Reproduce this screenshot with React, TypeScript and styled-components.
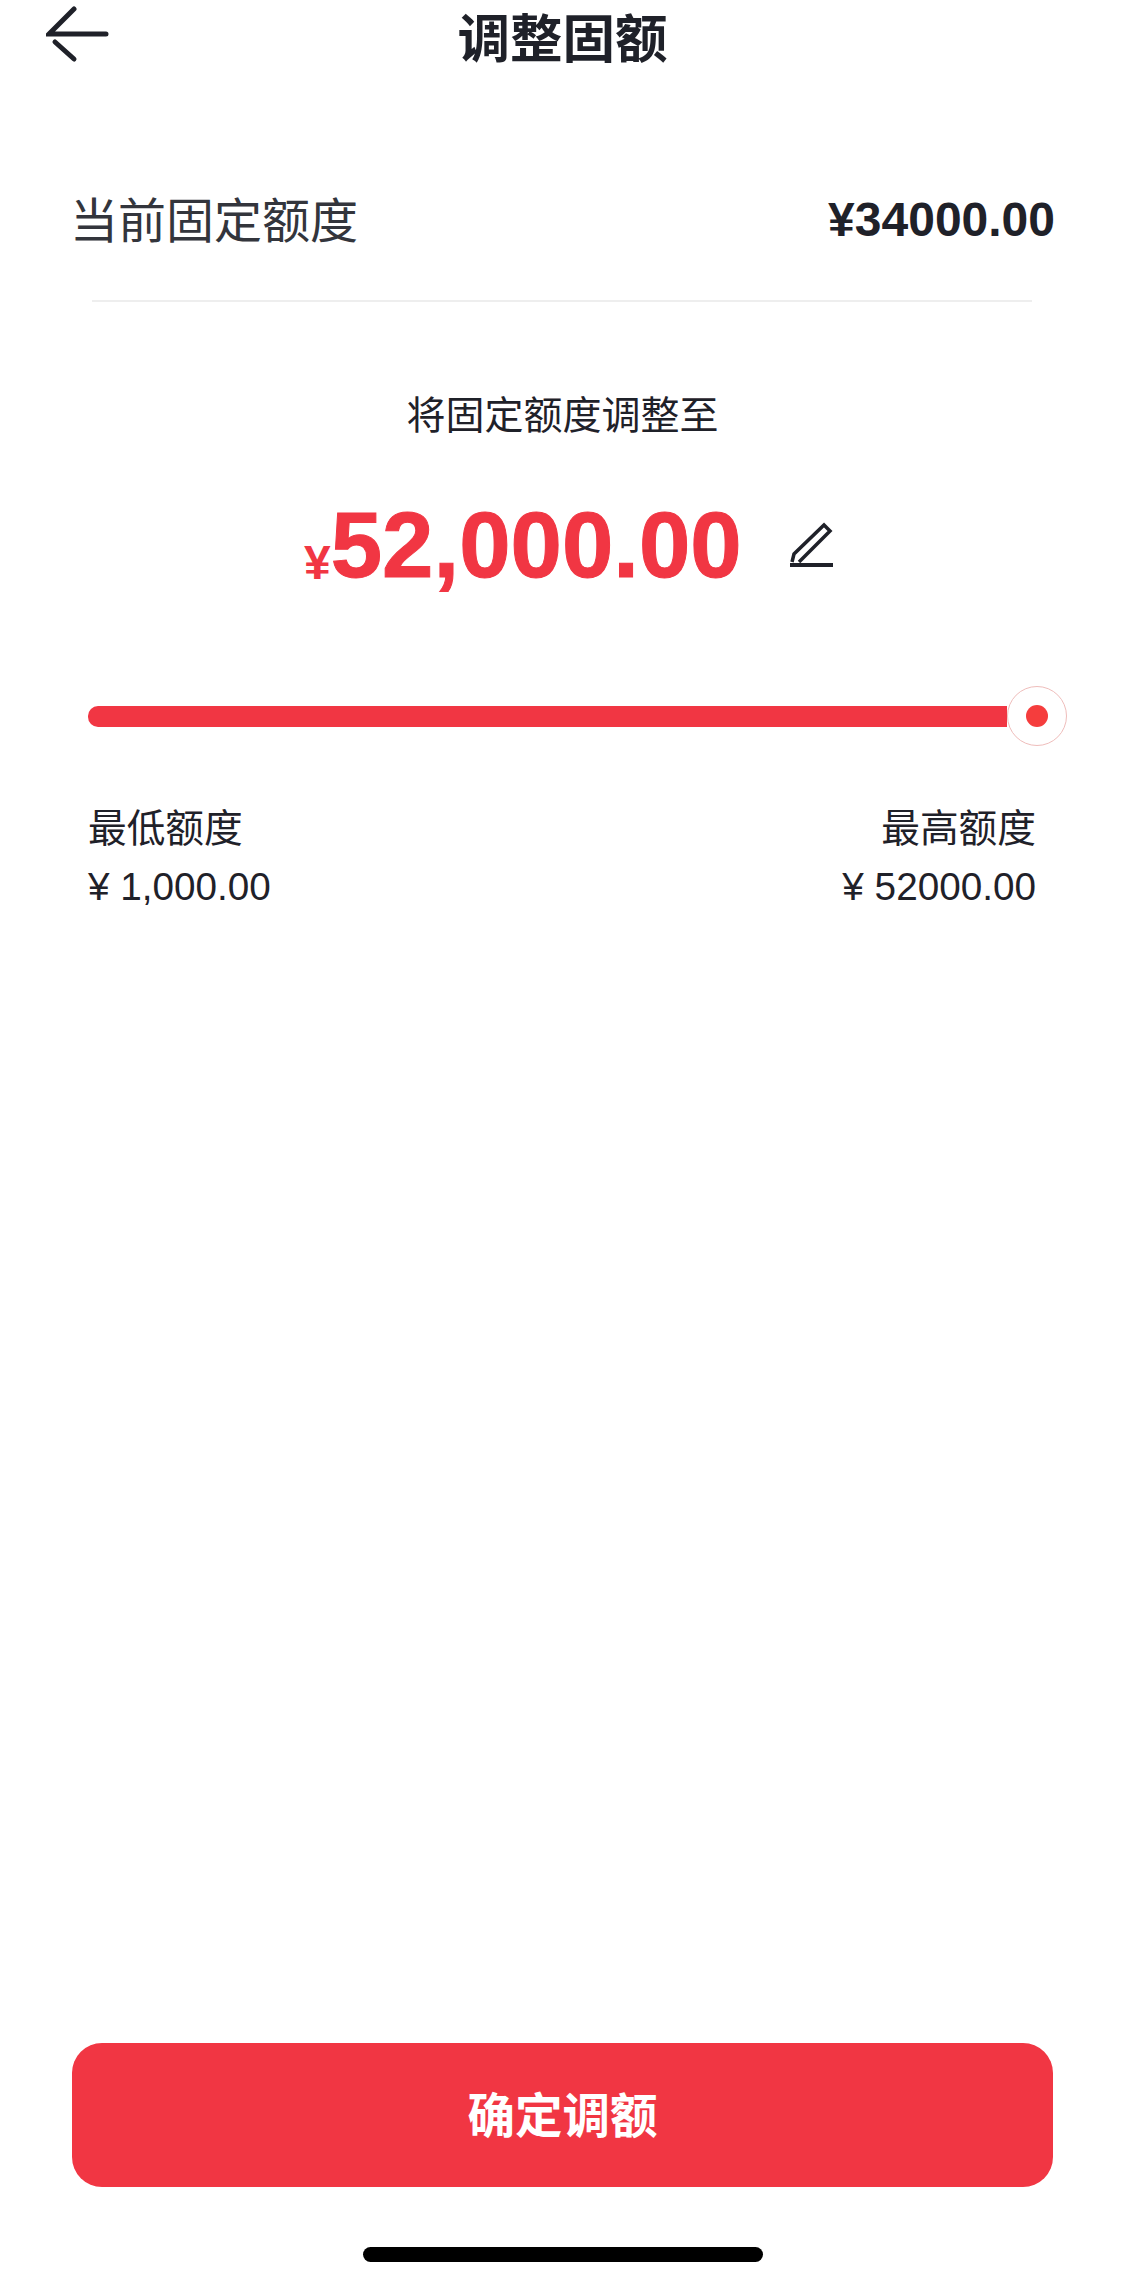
import styled, { createGlobalStyle } from "styled-components";

const GlobalStyle = createGlobalStyle`
  html, body {
    margin: 0;
    padding: 0;
    background: #fff;
  }
  * {
    box-sizing: border-box;
  }
`;

const FONT = `"Liberation Sans", "Noto Sans CJK SC", sans-serif`;
const RED = "#f13643";
const INK = "#1f2129";

const Page = styled.div`
  display: flex;
  flex-direction: column;
  width: 1125px;
  height: 2285px;
  overflow: hidden;
  font-family: ${FONT};
  color: ${INK};
  background: #fff;
`;

const NavBar = styled.header`
  display: grid;
  grid-template-columns: 1fr auto 1fr;
  height: 80px;
`;

const BackIcon = styled.svg`
  display: block;
  width: 64px;
  height: 64px;
  margin: 2px 0 0 46px;
`;

const Title = styled.h1`
  margin: 0;
  font-size: 52.5px;
  font-weight: 700;
  line-height: 80px;
`;

const CurrentRow = styled.div`
  display: flex;
  justify-content: space-between;
  align-items: center;
  height: 60px;
  margin-top: 109px;
  padding: 0 70px 0 70px;
`;

const CurrentLabel = styled.span`
  margin-bottom: 5px;
  font-size: 48px;
  color: #33353c;
`;

const CurrentValue = styled.span`
  font-size: 48px;
  font-weight: 700;
`;

const Divider = styled.hr`
  width: 940px;
  height: 2px;
  margin: 51px 0 0 92px;
  border: 0;
  background: #eeeeee;
`;

const AdjustLabel = styled.div`
  height: 56px;
  margin-top: 86px;
  font-size: 39px;
  line-height: 56px;
  text-align: center;
`;

const AmountRow = styled.div`
  display: flex;
  align-items: center;
  height: 110px;
  margin-top: 46px;
  padding-left: 304px;
`;

const Currency = styled.span`
  align-self: flex-end;
  margin-bottom: 13px;
  font-size: 48px;
  font-weight: 700;
  line-height: 48px;
  color: ${RED};
`;

const Amount = styled.span`
  font-size: 92.4px;
  font-weight: 700;
  line-height: 110px;
  color: ${RED};
  -webkit-text-stroke: 1px ${RED};
`;

const EditIcon = styled.svg`
  display: block;
  width: 48px;
  height: 48px;
  margin-left: 45px;
`;

const SliderRow = styled.div`
  display: flex;
  align-items: center;
  height: 62px;
  margin-top: 85px;
  padding-left: 88px;
`;

const Track = styled.div`
  width: 919px;
  height: 21px;
  border-radius: 10px 0 0 10px;
  background: ${RED};
`;

const Thumb = styled.div`
  display: flex;
  align-items: center;
  justify-content: center;
  width: 60px;
  height: 60px;
  border: 1.5px solid #efbdbb;
  border-radius: 50%;
  background: #fff;
`;

const ThumbDot = styled.div`
  width: 22px;
  height: 22px;
  border-radius: 50%;
  background: #f53d3d;
`;

const LimitRow = styled.div`
  display: flex;
  justify-content: space-between;
  margin-top: 56px;
  padding: 0 89px 0 88px;
`;

const Limit = styled.div<{ $end?: boolean }>`
  display: flex;
  flex-direction: column;
  gap: 6px;
  align-items: ${(p) => (p.$end ? "flex-end" : "flex-start")};
  font-size: 38.7px;
  line-height: 52px;
`;

const Footer = styled.footer`
  display: flex;
  flex-direction: column;
  align-items: center;
  margin-top: auto;
  padding-bottom: 23px;
`;

const ConfirmButton = styled.button`
  width: 981px;
  height: 144px;
  padding: 0 0 6px;
  border: 0;
  border-radius: 30px;
  font-family: ${FONT};
  font-size: 47.5px;
  font-weight: 700;
  color: #fff;
  background: ${RED};
`;

const HomeBar = styled.div`
  width: 400px;
  height: 15px;
  margin-top: 60px;
  border-radius: 8px;
  background: #000;
`;

const App = () => {
  return (
    <Page>
      <GlobalStyle />
      <NavBar>
        <BackIcon viewBox="0 0 64 64" fill="none" stroke={INK} strokeWidth="5" strokeLinecap="round">
          <path d="M28 7 L3 32 H60" />
          <path d="M9 40 L28 57" />
        </BackIcon>
        <Title>调整固额</Title>
      </NavBar>

      <CurrentRow>
        <CurrentLabel>当前固定额度</CurrentLabel>
        <CurrentValue>¥34000.00</CurrentValue>
      </CurrentRow>
      <Divider />

      <AdjustLabel>将固定额度调整至</AdjustLabel>
      <AmountRow>
        <Currency>¥</Currency>
        <Amount>52,000.00</Amount>
        <EditIcon viewBox="0 0 48 48" fill="none" stroke={INK} strokeWidth="3.5">
          <path d="M5 41 L7 33 L37 4 L43 10 L12 41" />
          <path d="M3 44 H46" strokeWidth="4" />
        </EditIcon>
      </AmountRow>

      <SliderRow>
        <Track />
        <Thumb>
          <ThumbDot />
        </Thumb>
      </SliderRow>

      <LimitRow>
        <Limit>
          <span>最低额度</span>
          <span>¥ 1,000.00</span>
        </Limit>
        <Limit $end>
          <span>最高额度</span>
          <span>¥ 52000.00</span>
        </Limit>
      </LimitRow>

      <Footer>
        <ConfirmButton>确定调额</ConfirmButton>
        <HomeBar />
      </Footer>
    </Page>
  );
};

export default App;
